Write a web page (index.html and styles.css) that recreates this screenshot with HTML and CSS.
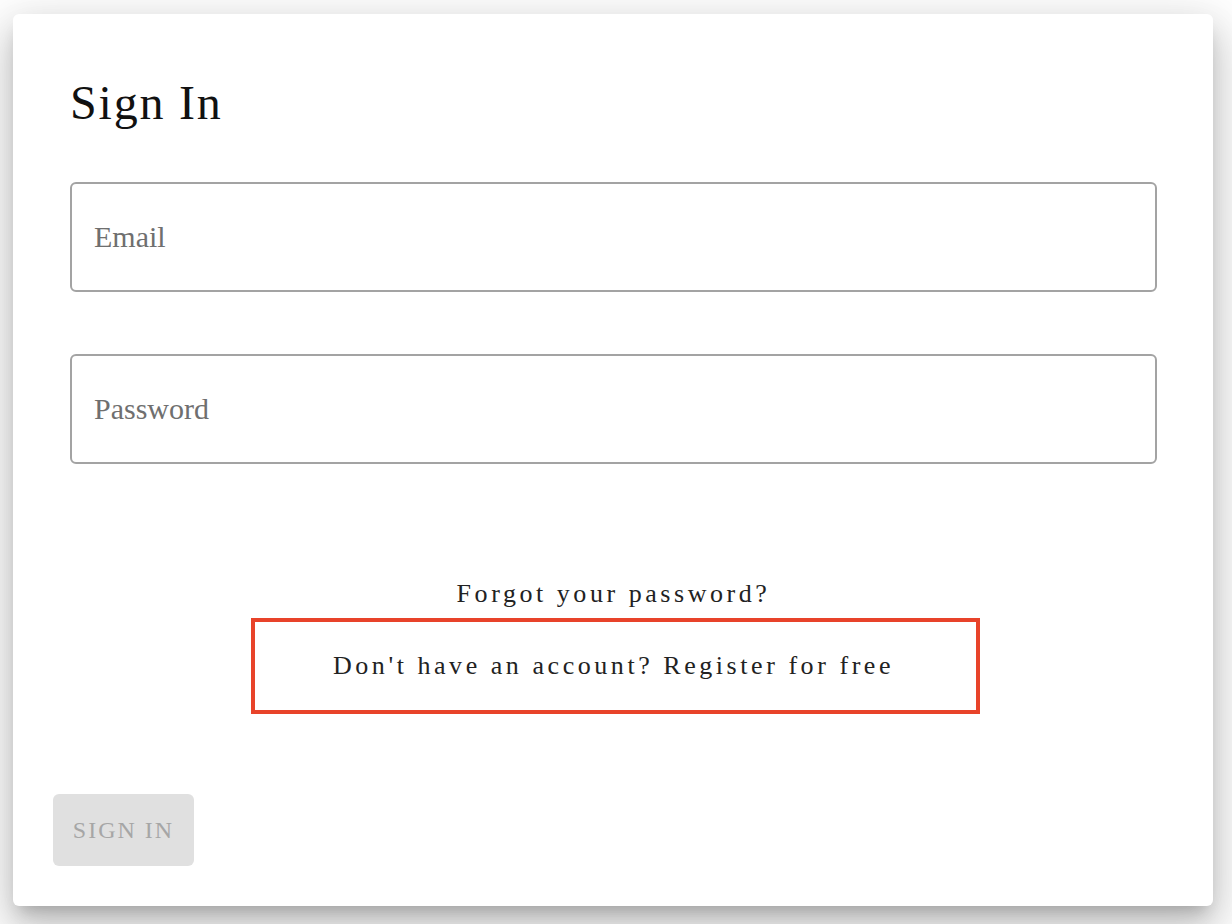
FILE: index.html
```html
<!DOCTYPE html>
<html>
<head>
<meta charset="utf-8">
<link rel="stylesheet" href="styles.css">
</head>
<body>
<div class="page">
  <div class="card">
    <div class="content">
      <h1 class="title">Sign In</h1>
      <div class="field"><input class="input" type="text" placeholder="Email"></div>
      <div class="field"><input class="input" type="password" placeholder="Password"></div>
      <div class="links">
        <div class="link">Forgot your password?</div>
        <div class="register"><span class="link">Don't have an account? Register for free</span></div>
      </div>
    </div>
    <div class="actions">
      <button class="btn" disabled>SIGN IN</button>
    </div>
  </div>
</div>
</body>
</html>
```
FILE: styles.css
```css
html, body {
  margin: 0;
  padding: 0;
  background: #ffffff;
}
body {
  font-family: "Liberation Serif", "Times New Roman", serif;
  width: 1232px;
  height: 924px;
  overflow: hidden;
}
.page {
  padding: 14px 19px 0 13px;
}
.card {
  width: 1200px;
  height: 892px;
  background: #fff;
  border-radius: 6px;
  box-shadow: 0 11px 15px -7px rgba(0,0,0,.2), 0 24px 38px 3px rgba(0,0,0,.14), 0 9px 46px 8px rgba(0,0,0,.12);
  display: flex;
  flex-direction: column;
  box-sizing: border-box;
}
.content {
  padding: 0 56px 0 57px;
  flex: 1;
}
.title {
  margin: 0;
  padding-top: 63px;
  font-weight: normal;
  font-size: 48px;
  letter-spacing: 1.8px;
  line-height: 52px;
  color: #111;
  height: 105px;
}
.field {
  margin-bottom: 62px;
}
.input {
  display: block;
  width: 100%;
  box-sizing: border-box;
  height: 110px;
  border: 2px solid #a3a3a3;
  border-radius: 6px;
  padding: 0 22px;
  font-family: inherit;
  font-size: 30px;
  color: #333;
  outline: none;
}
.input::placeholder {
  color: #6f6f6f;
}
.links {
  margin-top: 113px;
  display: flex;
  flex-direction: column;
  align-items: center;
}
.link {
  font-size: 26px;
  letter-spacing: 3.55px;
  color: #222;
  line-height: 34px;
}
.register {
  margin-top: 7px;
  margin-left: 4px;
  width: 729px;
  height: 96px;
  box-sizing: border-box;
  border: 4px solid #e8432a;
  display: flex;
  align-items: center;
  justify-content: center;
}
.register .link {
  margin-right: 4px;
}
.actions {
  padding: 0 0 40px 40px;
}
.btn {
  width: 141px;
  height: 72px;
  border: none;
  border-radius: 6px;
  background: #e0e0e0;
  color: #a6a6a6;
  font-family: inherit;
  font-size: 24px;
  letter-spacing: 2px;
  padding: 0;
}
```
